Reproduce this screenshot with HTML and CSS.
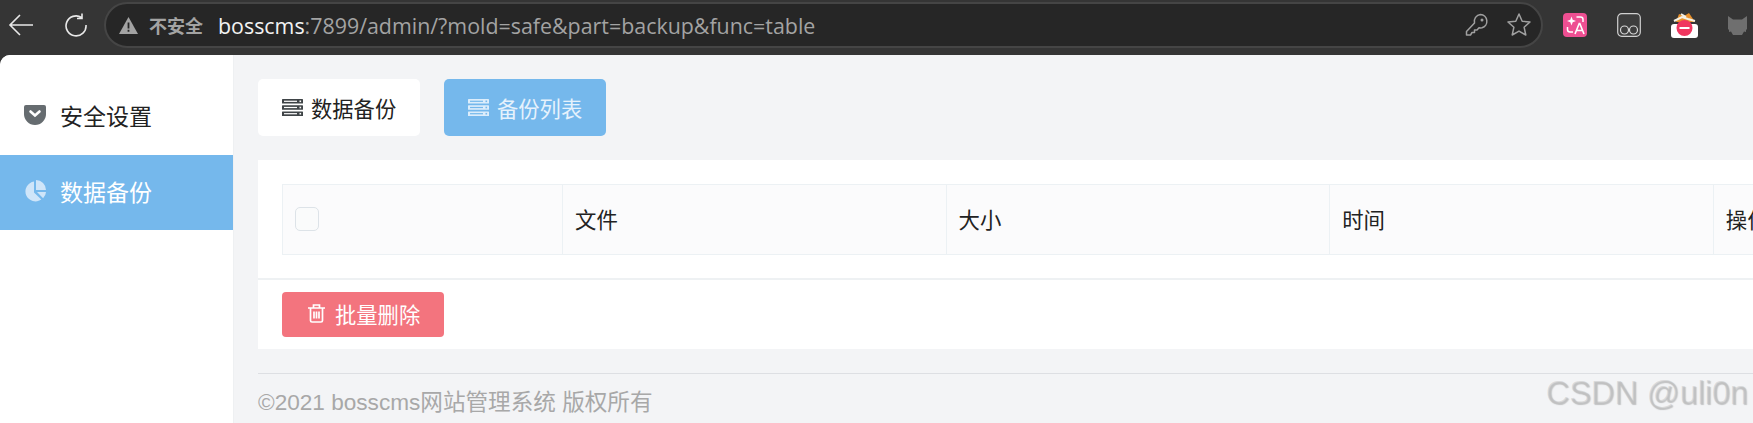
FILE: index.html
```html
<!DOCTYPE html>
<html lang="zh-CN">
<head>
  <meta charset="UTF-8">
  <title>bosscms</title>
  <link rel="stylesheet" href="styles.css">
</head>
<body>

  <header class="toolbar">
    <svg class="nav-icon back" width="26" height="24" viewBox="0 0 26 24"><path d="M25 12H2M12 2L2 12l10 10" fill="none" stroke="#e8e8e8" stroke-width="1.6"/></svg>
    <svg class="nav-icon reload" width="24" height="24" viewBox="0 0 24 24"><path d="M17.5 4.5A10 10 0 1 0 22 12M18 0.5v5h-5" fill="none" stroke="#e8e8e8" stroke-width="1.6"/></svg>
    <div class="address">
      <svg class="warn" width="19" height="17" viewBox="0 0 19 17"><path d="M9.5 0L19 17H0z" fill="#a3a3a3"/><path d="M8.6 5.5h1.8v6H8.6zM8.6 12.8h1.8v1.9H8.6z" fill="#262626"/></svg>
      <span class="not-safe">不安全</span>
      <span class="url"><b>bosscms</b>:7899/admin/?mold=safe&amp;part=backup&amp;func=table</span>
      <svg class="addr-icon" width="26" height="26" viewBox="0 0 26 26"><path d="M16.500 2.500a6.800 6.800 0 0 1 1.500 13.300c-1 .2-2 .2-3 0l-2 2.200h-2.500v2.500H8l-1.500 2.500H2.500v-3.500l8-8.500a6.800 6.800 0 0 1 6-8.500z" fill="none" stroke="#a0a0a0" stroke-width="1.500" stroke-linejoin="round"/><circle cx="18" cy="8" r="1.500" fill="#a0a0a0"/></svg>
      <svg class="addr-icon" width="26" height="26" viewBox="0 0 26 26"><path d="M13 2l3.200 7.200 7.800.8-5.900 5.200 1.700 7.800L13 19.100 6.200 23l1.700-7.800L2 10l7.800-.8z" fill="none" stroke="#a0a0a0" stroke-width="1.500" stroke-linejoin="round"/></svg>
    </div>
    <div class="extensions">
      <svg width="24" height="24" viewBox="0 0 24 24"><rect width="24" height="24" rx="4" fill="#ee4f92"/><path d="M8.500 3.500l1.200 3.300 3.300 1.200-3.300 1.200-1.200 3.300-1.200-3.300L4 8l3.300-1.200z" fill="#fff"/><path d="M13.500 4h4a2.500 2.500 0 0 1 2.500 2.500V9M4.500 14v2.500a2.500 2.500 0 0 0 2.500 2.500h3" fill="none" stroke="#fff" stroke-width="1.500"/><path d="M12 21l4.200-10.500h.6L21 21M13.600 17.500h5.800" fill="none" stroke="#fff" stroke-width="1.600"/></svg>
      <svg width="24" height="24" viewBox="0 0 24 24"><rect x=".7" y=".7" width="22.600" height="22.600" rx="4" fill="#3d3d3d" stroke="#d0d0d0" stroke-width="1.200"/><circle cx="7.500" cy="17" r="4" fill="none" stroke="#d8d8d8" stroke-width="1.200"/><circle cx="16.500" cy="17" r="4" fill="none" stroke="#d8d8d8" stroke-width="1.200"/></svg>
      <svg width="27" height="26" viewBox="0 0 27 26"><path d="M5 10l3-8 5 2 5-3 6 9z" fill="#e8902a"/><path d="M3 9l8-4 6 2 7 2M10 2l5 3" fill="none" stroke="#f4f0e4" stroke-width="2"/><rect y="12" width="27" height="14" rx="3" fill="#fff"/><circle cx="13.500" cy="16" r="8" fill="#f0365f"/><rect x="8.500" y="15" width="10" height="2" fill="#fff"/></svg>
      <svg width="19" height="19" viewBox="0 0 19 19"><path d="M0 0l5 3.500h9L19 0v13l-1 1v2l-2-.5-2 3.500H5l-2-3.500L1 16v-2l-1-1z" fill="#6f6f6f"/></svg>
    </div>
  </header>

  <div class="layout">
    <aside class="sidebar">
      <a class="menu-item first">
        <svg width="22" height="20" viewBox="0 0 22 20"><path d="M2 0h18a2 2 0 0 1 2 2v7a11 11 0 0 1-22 0V2a2 2 0 0 1 2-2z" fill="#666c70"/><path d="M6.500 6.500l4.500 4 4.500-4" fill="none" stroke="#fff" stroke-width="2.600" stroke-linecap="round"/></svg>
        安全设置
      </a>
      <a class="menu-item active">
        <svg width="22" height="22" viewBox="0 0 22 22"><path d="M10 1.500v11l7.300 7A10 10 0 1 1 10 1.500z" fill="#cfe5f9"/><path d="M12 0a10 10 0 0 1 10 10H12z" fill="#cfe5f9"/><path d="M13 12h9a10 10 0 0 1-2.900 6.300z" fill="#cfe5f9"/></svg>
        数据备份
      </a>
    </aside>

    <main class="content">
      <nav class="tabs">
        <a class="tab">
          <svg width="21" height="17" viewBox="0 0 21 17"><g fill="#3f4447"><rect width="21" height="4.600" rx=".6"/><rect y="6.200" width="21" height="4.600" rx=".6"/><rect y="12.400" width="21" height="4.600" rx=".6"/></g><g fill="#fff"><rect x="2" y="1.700" width="13" height="1.200"/><rect x="2" y="7.900" width="13" height="1.200"/><rect x="2" y="14.100" width="13" height="1.200"/><rect x="17.500" y="1.500" width="1.600" height="1.600"/><rect x="17.500" y="7.700" width="1.600" height="1.600"/><rect x="17.500" y="13.900" width="1.600" height="1.600"/></g></svg>
          数据备份
        </a>
        <a class="tab tab-active">
          <svg width="21" height="17" viewBox="0 0 21 17"><g fill="#dcedfb"><rect width="21" height="4.600" rx=".6"/><rect y="6.200" width="21" height="4.600" rx=".6"/><rect y="12.400" width="21" height="4.600" rx=".6"/></g><g fill="#75b8ec"><rect x="2" y="1.700" width="13" height="1.200"/><rect x="2" y="7.900" width="13" height="1.200"/><rect x="2" y="14.100" width="13" height="1.200"/><rect x="17.500" y="1.500" width="1.600" height="1.600"/><rect x="17.500" y="7.700" width="1.600" height="1.600"/><rect x="17.500" y="13.900" width="1.600" height="1.600"/></g></svg>
          备份列表
        </a>
      </nav>

      <section class="card">
        <div class="table-wrap">
          <table class="table">
            <colgroup>
              <col class="col-check"><col class="col-data"><col class="col-data"><col class="col-data"><col class="col-data">
            </colgroup>
            <thead>
              <tr>
                <th><span class="checkbox"></span></th>
                <th>文件</th>
                <th>大小</th>
                <th>时间</th>
                <th>操作</th>
              </tr>
            </thead>
          </table>
        </div>
        <div class="card-foot">
          <button class="btn-danger" type="button">
            <svg width="17" height="19" viewBox="0 0 17 19"><path d="M0 4h17M5.500 4V1h6v3M2.500 4v12.500a1.500 1.500 0 0 0 1.500 1.500h9a1.500 1.500 0 0 0 1.500-1.500V4M6 7.500v7M8.500 7.500v7M11 7.500v7" fill="none" stroke="#fff" stroke-width="1.700"/></svg>
            批量删除
          </button>
        </div>
      </section>

      <footer class="footer">©2021 bosscms网站管理系统 版权所有</footer>
    </main>
  </div>

  <div class="watermark">CSDN @uli0n</div>

</body>
</html>
```

FILE: styles.css
```css
* {
  box-sizing: border-box;
  margin: 0;
  padding: 0;
}

body {
  width: 1753px;
  height: 423px;
  overflow: hidden;
  background: #353535;
  font-family: "Liberation Sans", "Noto Sans CJK SC", sans-serif;
  color: #222;
}

svg {
  display: block;
  flex: none;
}

.toolbar {
  height: 55px;
  display: flex;
  align-items: center;
  padding-bottom: 5px;
  background: #353535;
}

.back {
  margin-left: 8px;
}

.reload {
  margin-left: 30px;
}

.address {
  width: 1439px;
  height: 46px;
  margin-left: 16px;
  padding: 0 9px 0 13px;
  display: flex;
  align-items: center;
  background: #262626;
  border: 2px solid #454545;
  border-radius: 23px;
  font-family: "Open Sans", "Noto Sans CJK SC", sans-serif;
}

.not-safe {
  margin-left: 11px;
  font-size: 18px;
  font-weight: bold;
  color: #a3a3a3;
  font-family: "Noto Sans CJK SC", sans-serif;
}

.url {
  margin-left: 15px;
  flex: 1;
  font-size: 21.4px;
  color: #a3a3a3;
  white-space: nowrap;
}

.url b {
  font-weight: normal;
  color: #f2f2f2;
}

.addr-icon + .addr-icon {
  margin-left: 16px;
}

.extensions {
  display: flex;
  align-items: center;
  gap: 30px;
  margin-left: 20px;
}

.layout {
  display: flex;
  height: 368px;
  background: #f3f4f6;
  border-top-left-radius: 10px;
  overflow: hidden;
}

.sidebar {
  width: 234px;
  flex: none;
  padding-top: 24px;
  background: #fff;
  border-right: 1px solid #eef0f2;
}

.menu-item {
  height: 75px;
  padding: 0 0 4px 24px;
  display: flex;
  align-items: center;
  gap: 14px;
  font-size: 23px;
  color: #222;
}

.menu-item.first {
  height: 76px;
}

.menu-item.active {
  background: #75b8ec;
  color: #fff;
}

.content {
  width: 1700px;
  flex: none;
  padding: 24px 0 0 24px;
}

.tabs {
  display: flex;
  gap: 24px;
}

.tab {
  width: 162px;
  height: 57px;
  padding: 0 0 1px 24px;
  display: flex;
  align-items: center;
  gap: 8px;
  font-size: 21.3px;
  background: #fff;
  border-radius: 5px;
  color: #222;
}

.tab-active {
  background: #75b8ec;
  color: #e6f2fc;
}

.card {
  margin-top: 24px;
  height: 189px;
  background: #fff;
}

.table-wrap {
  height: 120px;
  padding: 24px 0 0 24px;
  border-bottom: 2px solid #eef1f3;
}

.table {
  width: 1814.4px;
  height: 71px;
  table-layout: fixed;
  border-collapse: collapse;
  background: #fbfbfc;
}

.col-check {
  width: 280px;
}

.col-data {
  width: 383.6px;
}

.table th {
  padding: 0 0 2px 12px;
  font-size: 21.4px;
  font-weight: normal;
  text-align: left;
  border: 1px solid #ecf1f4;
  color: #222;
}

.checkbox {
  display: block;
  width: 24px;
  height: 24px;
  background: #fafbfb;
  border: 1.5px solid #dde3e8;
  border-radius: 5px;
}

.card-foot {
  padding: 12px 0 0 24px;
}

.btn-danger {
  width: 162px;
  height: 45px;
  padding: 0 0 3px 26px;
  display: flex;
  align-items: center;
  gap: 10px;
  font-family: inherit;
  font-size: 21.3px;
  color: #fff;
  background: #f3747e;
  border: none;
  border-radius: 4px;
}

.footer {
  margin-top: 24px;
  padding-top: 10px;
  font-size: 22.6px;
  color: #a8a8a8;
  border-top: 1.5px solid #dddfe3;
}

.watermark {
  position: absolute;
  left: 1546px;
  top: 375px;
  font-size: 32.4px;
  color: rgba(190, 190, 190, 0.45);
  text-shadow: 1px 1px 1px rgba(120, 120, 120, 0.4);
  white-space: nowrap;
}
```
